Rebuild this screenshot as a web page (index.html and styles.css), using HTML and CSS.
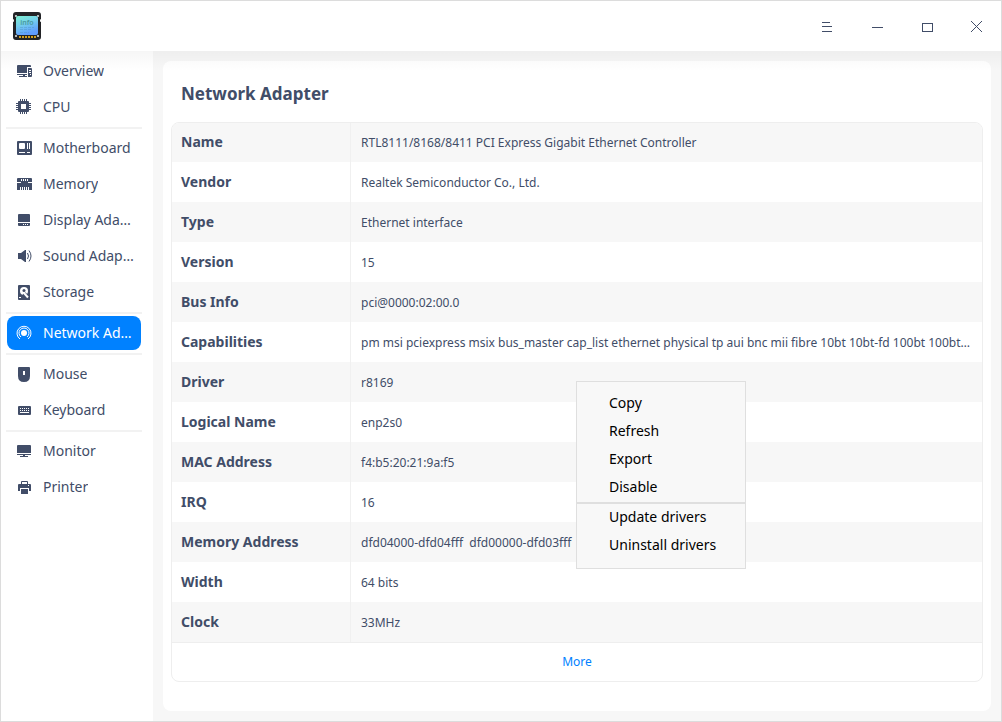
FILE: index.html
```html
<!DOCTYPE html>
<html lang="en">
<head>
<meta charset="utf-8">
<title>Device Info</title>
<link rel="stylesheet" href="styles.css">
</head>
<body>
<div class="window">
  <header class="titlebar">
    <svg class="logo" viewBox="0 0 28 28" aria-hidden="true">
      <defs><linearGradient id="chip" x1="0" y1="0" x2="0.4" y2="1"><stop offset="0" stop-color="#7cf0cf"/><stop offset="0.5" stop-color="#74cdee"/><stop offset="1" stop-color="#5f9cff"/></linearGradient></defs>
      <path fill="#222326" d="M3 0h22q3 0 3 3v4q-1 0-1 1.500t1 1.500v15q0 3-3 3H3q-3 0-3-3V10q1 0 1-1.500T0 7V3q0-3 3-3z"/>
      <g fill="#d8dbdd"><circle cx="3" cy="4" r="1.100"/><circle cx="25" cy="4" r="1.100"/><circle cx="3" cy="24" r="1.100"/><circle cx="25" cy="24" r="1.100"/></g>
      <rect x="3" y="4" width="22" height="19" rx="2" fill="url(#chip)"/>
      <path stroke="#d39f1c" stroke-width="2" stroke-dasharray="2 1" d="M6 25h17"/>
      <text class="logo-text" x="14" y="13" text-anchor="middle">info</text>
      <path stroke="#4c91bd" stroke-opacity=".4" stroke-dasharray="3 1" d="M7 15.500h14M7 17.500h12M7 20.500h9"/>
    </svg>
    <div class="controls">
      <button type="button" aria-label="Menu"><svg class="icon" viewBox="0 0 16 16"><path d="M4 4h8v1H4zM4 8h10v1H4zM4 13h10v1H4z"/></svg></button>
      <button type="button" aria-label="Minimize"><svg class="icon" viewBox="0 0 16 16"><path d="M4 9h11v1H4z"/></svg></button>
      <button type="button" aria-label="Maximize"><svg class="icon" viewBox="0 0 16 16"><path fill-rule="evenodd" d="M4 5h11v9H4zM5 6v7h9V6z"/></svg></button>
      <button type="button" aria-label="Close"><svg class="icon" viewBox="0 0 16 16"><path fill="none" stroke="currentColor" d="M3 3l11 11M14 3L3 14"/></svg></button>
    </div>
  </header>
  <div class="body">
    <nav class="sidebar" aria-label="Devices">
      <ul>
        <li><a href="#overview"><svg class="icon" viewBox="0 0 16 16"><path d="M2 2h12q1 0 1 1v1h-4v6H1V3q0-1 1-1zM1 11h10v1H9v1h2v1H3v-1h4v-1H1z"/><path fill-rule="evenodd" d="M12 5h3q1 0 1 1v7q0 1-1 1h-3zM13 7v1h2V7zM13 9v1h2V9zM14 11v1h1v-1z"/></svg><span>Overview</span></a></li>
        <li><a href="#cpu"><svg class="icon" viewBox="0 0 16 16"><path fill-rule="evenodd" d="M3 2h9q1 0 1 1v9q0 1-1 1H3q-1 0-1-1V3q0-1 1-1zM5 5v5h5V5z"/><path d="M4 0h1v2H4zM6 0h1v2H6zM8 0h1v2H8zM10 0h1v2h-1zM4 13h1v2H4zM6 13h1v2H6zM8 13h1v2H8zM10 13h1v2h-1zM0 4h2v1H0zM0 6h2v1H0zM0 8h2v1H0zM0 10h2v1H0zM13 4h2v1h-2zM13 6h2v1h-2zM13 8h2v1h-2zM13 10h2v1h-2z"/></svg><span>CPU</span></a></li>
      </ul>
      <ul>
        <li><a href="#motherboard"><svg class="icon" viewBox="0 0 16 16"><path d="M2 1h13q1 0 1 1v12q0 1-1 1H2q-1 0-1-1V2q0-1 1-1z"/><path fill="#fff" d="M4 3h4q1 0 1 1v4q0 1-1 1H4q-1 0-1-1V4q0-1 1-1zM11 3h1v6h-1zM13 3h1v6h-1zM3 12h6v1H3zM11 12h3v1h-3z"/></svg><span>Motherboard</span></a></li>
        <li><a href="#memory"><svg class="icon" viewBox="0 0 16 16"><path d="M2 2h13q1 0 1 1v11H1V3q0-1 1-1z"/><path fill="#fff" d="M5 3h1v2H5zM7 3h1v2H7zM9 3h1v2H9zM11 3h1v2h-1zM1 6h4v1H1zM12 6h4v1h-4zM4 11h1v3H4zM6 11h1v3H6zM8 11h1v3H8zM10 11h1v3h-1zM12 11h1v3h-1z"/></svg><span>Memory</span></a></li>
        <li><a href="#display"><svg class="icon" viewBox="0 0 16 16"><path fill-rule="evenodd" d="M3 2h10q1 0 1 1v7H2V3q0-1 1-1zM2 11h12v2q0 1-1 1H3q-1 0-1-1zM7 12v1h1v-1zM9 12v1h1v-1zM11 12v1h1v-1z"/></svg><span>Display Ada…</span></a></li>
        <li><a href="#sound"><svg class="icon" viewBox="0 0 16 16"><path d="M2 5h3l4-3h1v12H9l-4-3H2z"/><path fill="none" stroke="currentColor" d="M11.500 5q2 3 0 6M13 2.500q4 5.500 0 11"/></svg><span>Sound Adap…</span></a></li>
        <li><a href="#storage"><svg class="icon" viewBox="0 0 16 16"><path d="M3 1h10q1 0 1 1v14H3q-1 0-1-1V2q0-1 1-1z"/><circle cx="8" cy="7" r="4" fill="#fff"/><circle cx="8" cy="6.500" r="1.500"/><path stroke="currentColor" stroke-width="4" d="M8 9.500l3.500 4"/><path stroke="#fff" stroke-width="2" d="M8 9l4 4.500"/><path fill="#fff" d="M3 13h2v1H3z"/></svg><span>Storage</span></a></li>
      </ul>
      <ul>
        <li><a class="active" href="#network" aria-current="page"><svg class="icon" viewBox="0 0 16 16"><circle cx="8" cy="8" r="3"/><path fill="none" stroke="currentColor" d="M5 12A5 5 0 1 1 11 12M4 14A7 7 0 1 1 12 14"/></svg><span>Network Ad…</span></a></li>
      </ul>
      <ul>
        <li><a href="#mouse"><svg class="icon" viewBox="0 0 16 16"><path fill-rule="evenodd" d="M3 1h10q1 0 1 1v8q0 6-6 6t-6-6V2q0-1 1-1zM7 5v4h2V5z"/></svg><span>Mouse</span></a></li>
        <li><a href="#keyboard"><svg class="icon" viewBox="0 0 16 16"><path fill-rule="evenodd" d="M3 4h11q1 0 1 1v7q0 1-1 1H3q-1 0-1-1V5q0-1 1-1zM4 6v1h1V6zM6 6v1h1V6zM8 6v1h1V6zM10 6v1h1V6zM12 6v1h1V6zM4 8v1h1V8zM6 8v1h1V8zM8 8v1h1V8zM10 8v1h1V8zM12 8v1h1V8zM4 10v1h9v-1z"/></svg><span>Keyboard</span></a></li>
      </ul>
      <ul>
        <li><a href="#monitor"><svg class="icon" viewBox="0 0 16 16"><path d="M2 2h12q1 0 1 1v7H1V3q0-1 1-1zM1 11h14v1H9v1h3v1H4v-1h3v-1H1z"/></svg><span>Monitor</span></a></li>
        <li><a href="#printer"><svg class="icon" viewBox="0 0 16 16"><path fill-rule="evenodd" d="M6 2h5q1 0 1 1v2h2q1 0 1 1v6h-2v-3H4v3H2V6q0-1 1-1h2V3q0-1 1-1zM6 3v2h5V3zM12 6v1h1V6z"/><path d="M5 10h7v5H5z"/></svg><span>Printer</span></a></li>
      </ul>
    </nav>
    <main class="main">
      <section class="card">
        <h1>Network Adapter</h1>
        <div class="panel">
          <table>
            <tbody>
              <tr><th scope="row">Name</th><td>RTL8111/8168/8411 PCI Express Gigabit Ethernet Controller</td></tr>
              <tr><th scope="row">Vendor</th><td>Realtek Semiconductor Co., Ltd.</td></tr>
              <tr><th scope="row">Type</th><td>Ethernet interface</td></tr>
              <tr><th scope="row">Version</th><td>15</td></tr>
              <tr><th scope="row">Bus Info</th><td>pci@0000:02:00.0</td></tr>
              <tr><th scope="row">Capabilities</th><td>pm msi pciexpress msix bus_master cap_list ethernet physical tp aui bnc mii fibre 10bt 10bt-fd 100bt 100bt…</td></tr>
              <tr><th scope="row">Driver</th><td>r8169</td></tr>
              <tr><th scope="row">Logical Name</th><td>enp2s0</td></tr>
              <tr><th scope="row">MAC Address</th><td>f4:b5:20:21:9a:f5</td></tr>
              <tr><th scope="row">IRQ</th><td>16</td></tr>
              <tr><th scope="row">Memory Address</th><td>dfd04000-dfd04fff&nbsp; dfd00000-dfd03fff</td></tr>
              <tr><th scope="row">Width</th><td>64 bits</td></tr>
              <tr><th scope="row">Clock</th><td>33MHz</td></tr>
            </tbody>
          </table>
          <div class="more"><a href="#more">More</a></div>
        </div>
      </section>
    </main>
  </div>
  <div class="menu" role="menu">
    <button type="button" role="menuitem">Copy</button>
    <button type="button" role="menuitem">Refresh</button>
    <button type="button" role="menuitem">Export</button>
    <button type="button" role="menuitem">Disable</button>
    <hr>
    <button type="button" role="menuitem">Update drivers</button>
    <button type="button" role="menuitem">Uninstall drivers</button>
  </div>
</div>
</body>
</html>
```
FILE: styles.css
```css
* {
  box-sizing: border-box;
}

body {
  margin: 0;
  color: #414d68;
  font: 14px/20px "Noto Sans", sans-serif;
}

button {
  padding: 0;
  border: 0;
  background: none;
  color: inherit;
  font: inherit;
}

a {
  color: inherit;
  text-decoration: none;
}

.window {
  position: relative;
  display: flex;
  flex-direction: column;
  min-height: 100vh;
  border: 1px solid #dcdcdc;
  background: #fff;
}

.titlebar {
  position: relative;
  display: flex;
  align-items: center;
  justify-content: space-between;
  height: 50px;
  padding-left: 12px;
}

/* Soft shadow cast by the title bar over the content */
.titlebar::after {
  content: "";
  position: absolute;
  top: 100%;
  left: 0;
  right: 0;
  height: 20px;
  background: linear-gradient(rgba(0, 0, 0, 0.035), rgba(0, 0, 0, 0));
  pointer-events: none;
}

.logo {
  width: 28px;
  height: 28px;
}

.logo-text {
  fill: #489aa0;
  font-size: 7px;
  font-weight: 600;
}

.controls {
  display: flex;
}

.controls button {
  display: grid;
  place-items: center;
  width: 50px;
  height: 50px;
}

.icon {
  display: block;
  flex: none;
  width: 16px;
  height: 16px;
  fill: currentColor;
}

.body {
  display: flex;
  flex: 1;
}

.sidebar {
  flex: none;
  width: 152px;
  padding: 2px 11px 2px 5px;
}

.sidebar ul {
  margin: 0;
  padding: 0;
  list-style: none;
}

.sidebar ul + ul {
  margin-top: 2px;
  padding-top: 1px;
  border-top: 2px solid #f2f2f2;
}

.sidebar a {
  display: flex;
  align-items: center;
  gap: 11px;
  height: 34px;
  margin: 0 1px;
  padding-left: 9px;
  border-radius: 8px;
}

.sidebar li {
  padding: 1px 0;
}

.sidebar span {
  overflow: hidden;
  text-overflow: ellipsis;
  white-space: nowrap;
}

.sidebar .active {
  background: #0081ff;
  color: #fff;
}

.main {
  display: flex;
  flex: 1;
  min-width: 0;
  padding: 10px;
  background: #f7f7f7;
}

.card {
  flex: 1;
  min-width: 0;
  padding: 21px 8px;
  border-radius: 8px;
  background: #fff;
}

h1 {
  margin: 0 0 16px;
  padding: 0 10px;
  font-size: 17px;
  line-height: 24px;
  font-weight: 700;
}

.panel {
  overflow: hidden;
  border: 1px solid #eee;
  border-radius: 8px;
}

table {
  width: 100%;
  table-layout: fixed;
  border-collapse: separate;
  border-spacing: 0;
}

tr {
  height: 40px;
}

tr:first-child {
  height: 39px;
}

tr:nth-child(odd) {
  background: #f7f7f7;
}

th,
td {
  overflow: hidden;
  text-align: left;
  text-overflow: ellipsis;
  white-space: nowrap;
}

th {
  width: 179px;
  padding: 0 9px;
  border-right: 1px solid #f0f0f0;
  font-weight: 700;
}

tr:first-child th {
  padding-bottom: 1px;
}

td {
  padding: 1px 10px 0;
  font-size: 12px;
}

tr:first-child td {
  padding-top: 0;
}

.more {
  display: grid;
  place-items: center;
  height: 39px;
  padding-bottom: 1px;
  border-top: 1px solid #eee;
  color: #0081ff;
  font-size: 12px;
}

.menu {
  position: absolute;
  top: 380px;
  left: 575px;
  display: flex;
  flex-direction: column;
  width: 170px;
  padding: 8px 0;
  border: 1px solid #dfdfdf;
  background: #f8f8f8;
  color: #000;
}

.menu button {
  height: 28px;
  padding: 0 0 2px 32px;
  text-align: left;
}

.menu hr {
  width: 100%;
  height: 2px;
  margin: 0;
  border: 0;
  background: #dfdfdf;
}
```
